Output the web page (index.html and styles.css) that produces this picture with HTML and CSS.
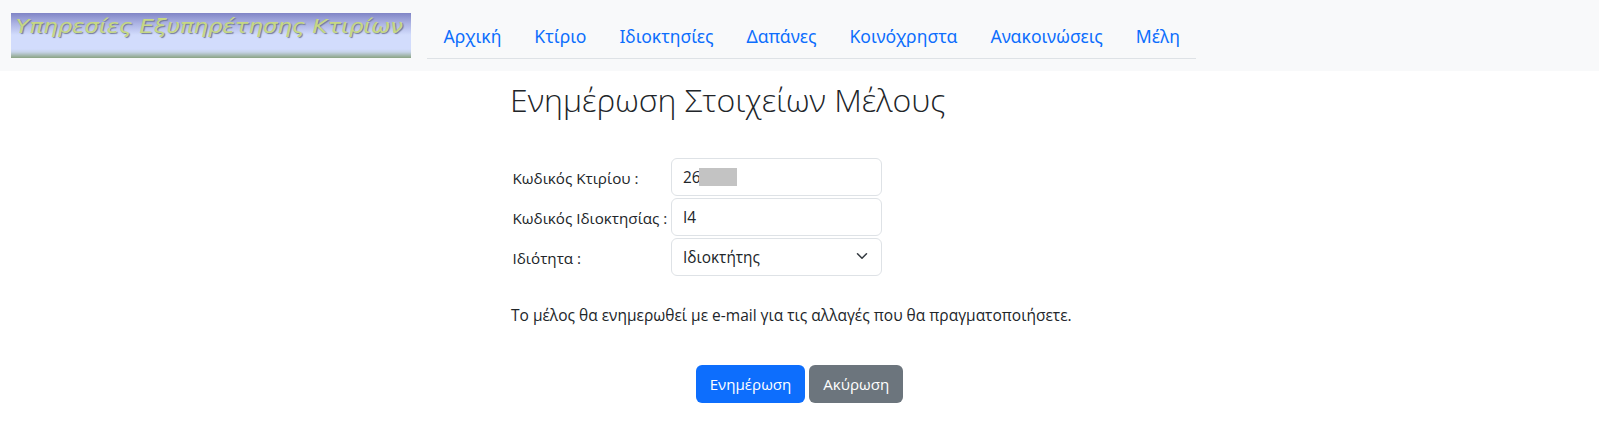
FILE: index.html
```html
<!DOCTYPE html>
<html lang="el">
<head>
<meta charset="utf-8">
<title>Ενημέρωση Στοιχείων Μέλους</title>
<link rel="stylesheet" href="styles.css">
</head>
<body>
<header class="topbar">
  <div class="logo"><span class="logo-text">Υπηρεσίες Εξυπηρέτησης Κτιρίων</span></div>
  <nav class="nav">
    <a href="#">Αρχική</a>
    <a href="#">Κτίριο</a>
    <a href="#">Ιδιοκτησίες</a>
    <a href="#">Δαπάνες</a>
    <a href="#">Κοινόχρηστα</a>
    <a href="#">Ανακοινώσεις</a>
    <a href="#">Μέλη</a>
  </nav>
</header>
<main class="content">
  <h1 class="title">Ενημέρωση Στοιχείων Μέλους</h1>
  <form class="form">
    <div class="row">
      <label class="label">Κωδικός Κτιρίου :</label>
      <div class="control">26<span class="redact"></span></div>
    </div>
    <div class="row">
      <label class="label">Κωδικός Ιδιοκτησίας :</label>
      <div class="control">Ι4</div>
    </div>
    <div class="row">
      <label class="label">Ιδιότητα :</label>
      <div class="control select">Ιδιοκτήτης
        <svg class="chevron" viewBox="0 0 16 16" width="16" height="12" aria-hidden="true"><path d="M2 5l6 6 6-6" fill="none" stroke="#343a40" stroke-width="2" stroke-linecap="round" stroke-linejoin="round"/></svg>
      </div>
    </div>
  </form>
  <p class="note">Το μέλος θα ενημερωθεί με e-mail για τις αλλαγές που θα πραγματοποιήσετε.</p>
  <div class="actions">
    <button type="button" class="btn primary">Ενημέρωση</button>
    <button type="button" class="btn secondary">Ακύρωση</button>
  </div>
</main>
</body>
</html>
```
FILE: styles.css
```css
* { box-sizing: border-box; }
html, body { margin: 0; padding: 0; }
body {
  background: #fff;
  color: #212529;
  font-family: "Open Sans", "Noto Sans", sans-serif;
  font-size: 15px;
  line-height: 1.5;
}
.topbar {
  display: flex;
  align-items: flex-start;
  height: 71px;
  background: #f8f9fa;
  padding: 13px 0 0 11px;
}
.logo {
  width: 400px;
  height: 45px;
  background: linear-gradient(#8085c6 0, #aab1e2 10px, #d2dcfc 22px, #d2dcfc 36px, #c6d3e8 39px, #8aa383 45px);
  overflow: hidden;
  flex: none;
}
.logo-text {
  display: block;
  padding-left: 4px;
  font-family: "DejaVu Sans", sans-serif;
  font-style: italic;
  font-size: 20px;
  line-height: 26px;
  color: #c6d884;
  text-shadow: 1px 1px 1px #727a98;
  white-space: nowrap;
  transform: scaleX(1.14);
  transform-origin: left center;
}
.nav {
  display: flex;
  margin: 3px 0 0 16px;
  height: 43px;
  border-bottom: 1px solid #dee2e6;
}
.nav a {
  padding: 7px 16.5px;
  font-family: "Noto Sans", sans-serif;
  font-size: 17.6px;
  line-height: 26px;
  color: #0d6efd;
  text-decoration: none;
  white-space: nowrap;
}
.content {
  width: 577px;
  margin: 0 auto;
}
.title {
  margin: 5px 0 0 -1px;
  font-size: 32px;
  font-weight: 300;
  line-height: 48px;
  white-space: nowrap;
}
.form {
  margin-top: 34px;
  display: flex;
  flex-direction: column;
  gap: 2.5px;
}
.row {
  display: flex;
  align-items: center;
  height: 37.5px;
}
.label {
  width: 160px;
  padding: 3px 0 0 1.5px;
  font-size: 15.2px;
  white-space: nowrap;
}
.control {
  position: relative;
  width: 211px;
  height: 37.5px;
  padding: 7px 11px 5px;
  border: 1px solid #dee2e6;
  border-radius: 6px;
  background: #fff;
  font-size: 15.4px;
  line-height: 24px;
}
.redact {
  display: inline-block;
  width: 38px;
  height: 18px;
  margin-left: -2px;
  background: #c3c3c3;
  vertical-align: -3px;
}
.chevron {
  position: absolute;
  right: 11.5px;
  top: 11px;
}
.note {
  margin: 27px 0 0;
  font-size: 15.5px;
  line-height: 24px;
  white-space: nowrap;
}
.actions {
  display: flex;
  justify-content: center;
  gap: 4px;
  margin-top: 38px;
}
.btn {
  height: 38px;
  padding: 0 14px;
  border: 0;
  border-radius: 6px;
  color: #fff;
  font-family: inherit;
  font-size: 15.1px;
}
.primary { background: #0d6efd; }
.secondary { background: #6c757d; }
```
